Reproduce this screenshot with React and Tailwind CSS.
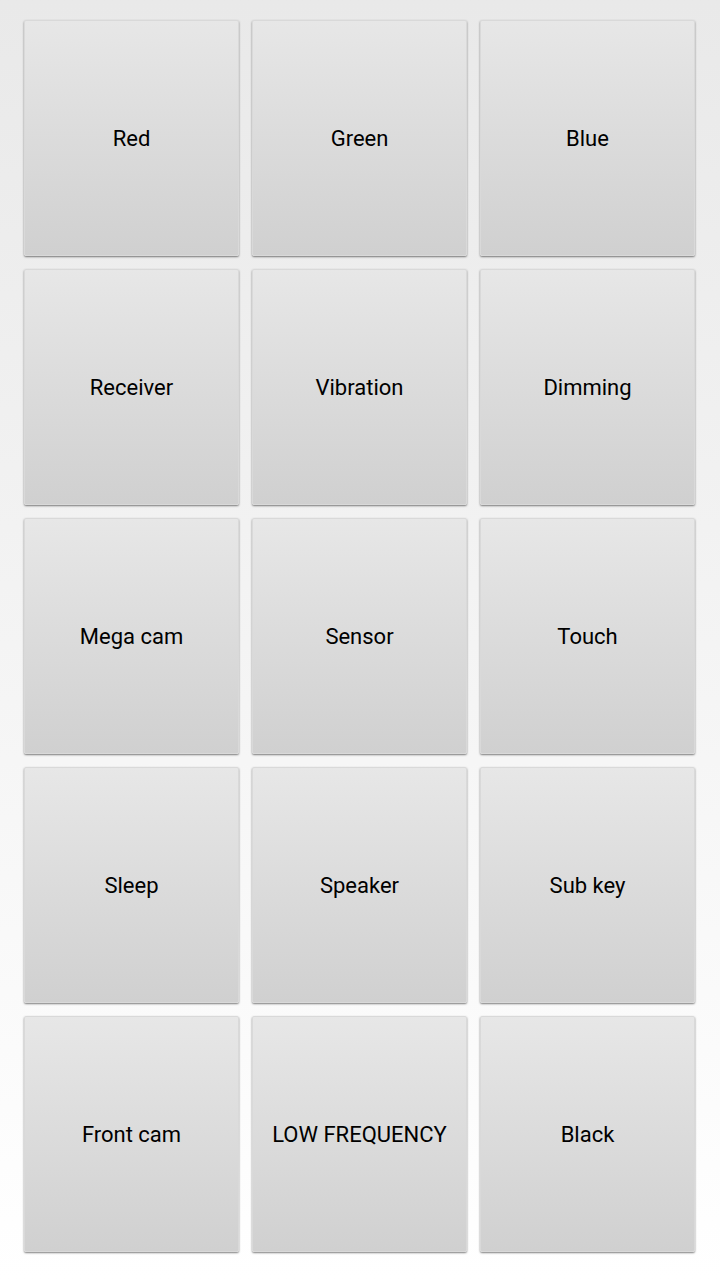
import React from "react";

const items = [
  "Red", "Green", "Blue",
  "Receiver", "Vibration", "Dimming",
  "Mega cam", "Sensor", "Touch",
  "Sleep", "Speaker", "Sub key",
  "Front cam", "LOW FREQUENCY", "Black",
];

export default function App() {
  return (
    <div className="min-h-[1280px] w-[720px] bg-gradient-to-b from-[#e9e9e9] to-[#ffffff] pl-6 pt-5 font-['Roboto',sans-serif]">
      <div className="grid w-[671px] grid-cols-3 gap-x-[13px] gap-y-[13px]">
        {items.map((label) => (
          <button
            key={label}
            className="flex h-[236px] items-center justify-center rounded-[2px] border border-[#d9d9d9] bg-gradient-to-b from-[#e7e7e7] to-[#d0d0d0] text-[22px] text-black shadow-[0_1px_2px_rgba(0,0,0,0.5)]"
          >
            {label}
          </button>
        ))}
      </div>
    </div>
  );
}
